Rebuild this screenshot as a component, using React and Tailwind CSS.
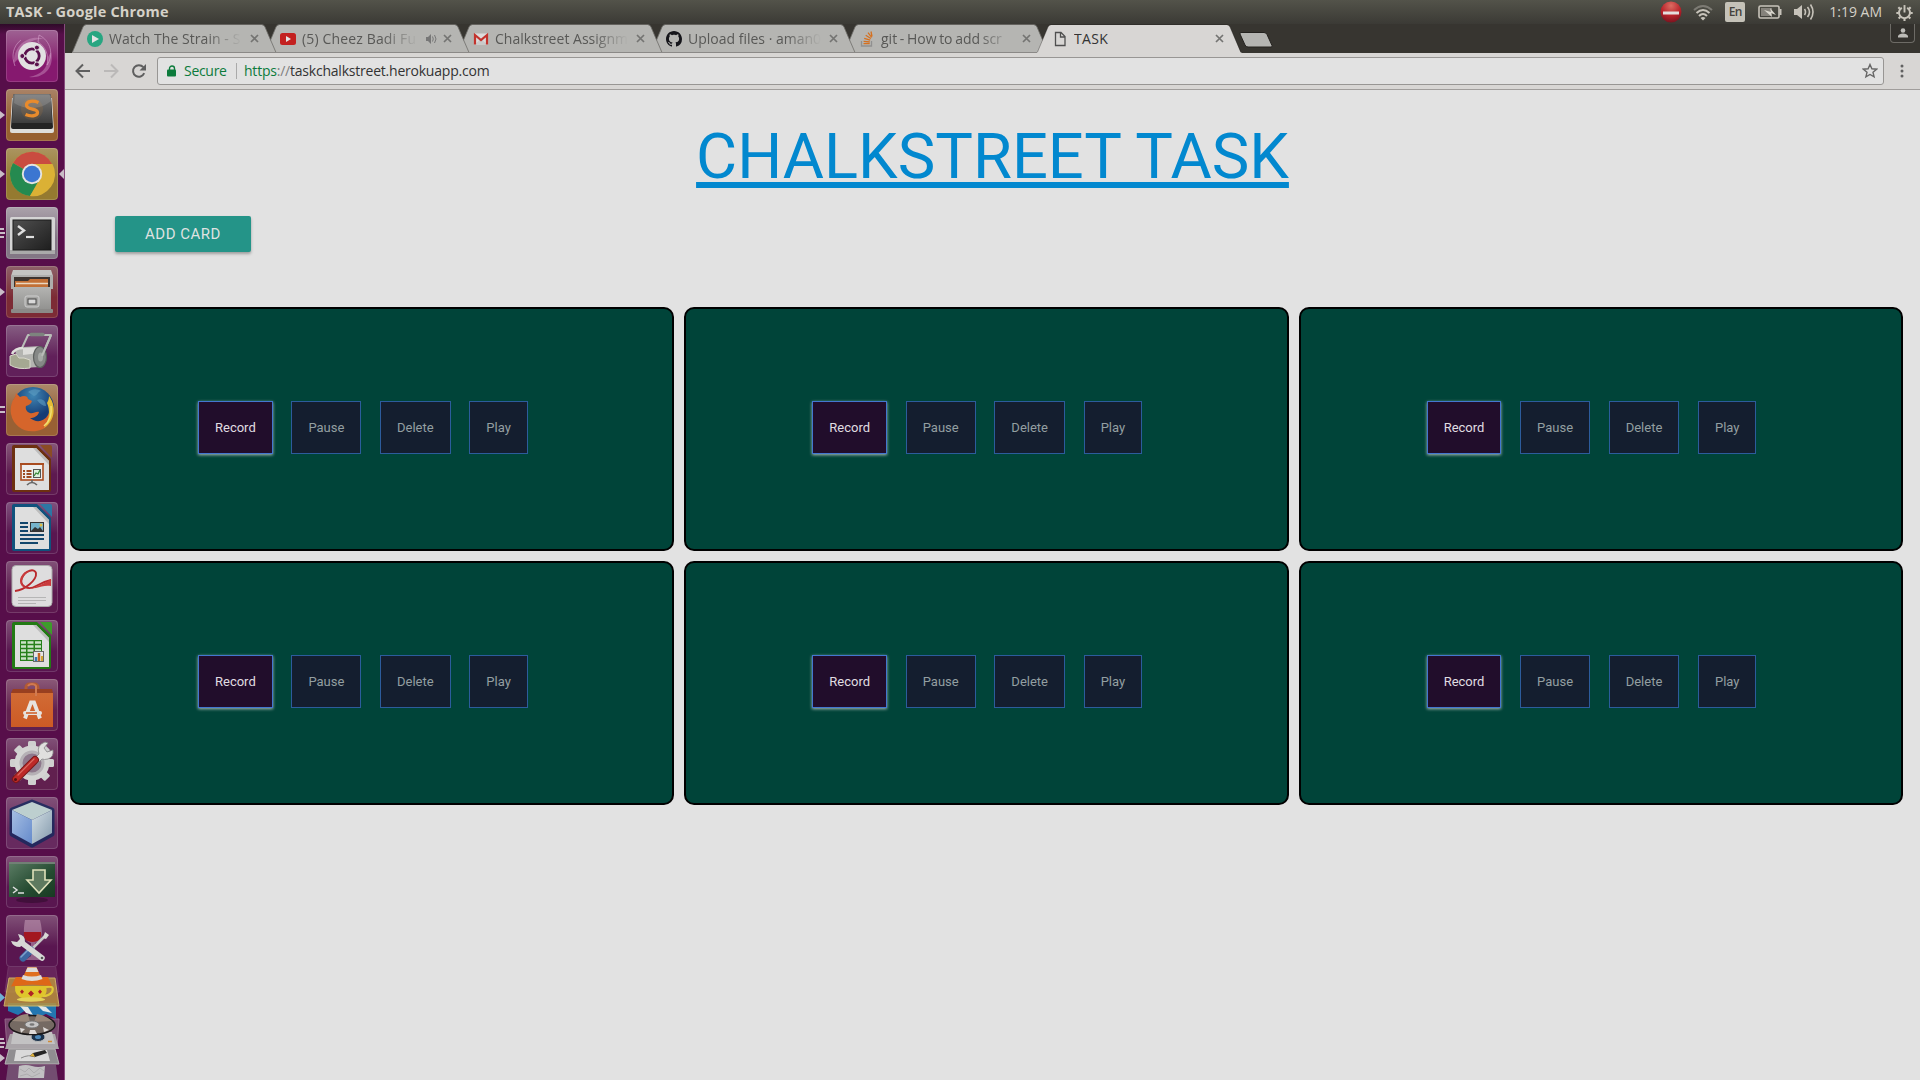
import React from "react";

const shade = "font-['Open_Sans',sans-serif]";

/* ---------- launcher icons, each drawn on a 52 x 52 tile ---------- */

const Ubuntu = () => (
  <g>
    <path d="M8 33C7 16 22 4 38 9c-12-1-22 6-24 18zM45 22c4 16-8 27-22 25 12-2 19-9 19-20z" fill="#d6a5cc" opacity=".4" />
    <path d="M33 5c12 6 15 20 8 30 2-10-1-18-9-23zM15 10C7 16 5 26 9 36" fill="none" stroke="#d9a8d0" strokeWidth="1" opacity=".55" />
    <circle cx="26" cy="26" r="14" fill="#e2e0e2" />
    <circle cx="26" cy="26" r="7.2" fill="none" stroke="#5a104d" strokeWidth="2.8" />
    <path d="M26 26L15 26M26 26l5.500-9.500M26 26l5.500 9.500" stroke="#e2e0e2" strokeWidth="1.4" />
    {[[16.300, 26], [30.900, 17.600], [30.900, 34.400]].map(([x, y]) => (
      <circle key={y} cx={x} cy={y} r="2.500" fill="#5a104d" stroke="#e2e0e2" strokeWidth="1" />
    ))}
  </g>
);

const Sublime = () => (
  <g>
    <path d="M6 9h40l2 33q0 2-2 2H6q-2 0-2-2z" fill="#deddda" />
    <path d="M9 5h34q2 0 2 2l2 31q0 2-2 2H7q-2 0-2-2L7 7q0-2 2-2z" fill="#242424" />
    <path d="M9 5h34q2 0 2 2l1 27H6L7 7q0-2 2-2z" fill="url(#gKey)" />
    <path d="M8 14C20 22 36 20 45 12L44 7q0-1-1-1H9z" fill="#aaa" opacity=".3" />
    <ellipse cx="26" cy="20" rx="11" ry="11" fill="#e98b2c" opacity=".12" />
    <path d="M32.500 13.500c-5-2-12-2-12 2.500 0 5.500 11 3 11 7.500 0 4-7 4-12 2" fill="none" stroke="#e98b2c" strokeWidth="3.300" />
  </g>
);

const ChromeIcon = () => (
  <g>
    <circle cx="26" cy="26" r="22" fill="#d9ae35" />
    <path d="M26 26L7 15A22 22 0 0 1 46 16z" fill="#c94c40" />
    <path d="M26 26L7 15a22 22 0 0 0 17 33l9-16z" fill="#258a50" />
    <path d="M26 16h20.500A22 22 0 0 1 24 48l11-17z" fill="#dbb135" />
    <circle cx="26" cy="26" r="10.200" fill="#e5e4e2" />
    <circle cx="26" cy="26" r="8.300" fill="#3c76d1" />
  </g>
);

const Terminal = () => (
  <g>
    <rect x="4" y="10" width="45" height="37" rx="1.500" fill="#d4d4d4" />
    <rect x="4" y="43" width="45" height="4" fill="#aaa" />
    <rect x="7" y="13" width="38" height="30" fill="url(#gTerm)" stroke="#1b1b1b" />
    <path d="M12 19l6 4.500-6 4.500" fill="none" stroke="#dedede" strokeWidth="2.400" />
    <path d="M20 30h8" stroke="#dedede" strokeWidth="2.200" />
  </g>
);

const Files = () => (
  <g>
    <path d="M7 4h38l2 6H5z" fill="#c4c4c2" />
    <rect x="5" y="9" width="42" height="14" fill="#aeaeac" />
    <rect x="8" y="11" width="36" height="11" fill="#3d342f" />
    <path d="M9 15h13l2-2h18v9H9z" fill="#c27036" />
    <path d="M10 17.500h32" stroke="#ead8c2" strokeWidth="1.500" />
    <rect x="7" y="21" width="38" height="26" rx="1" fill="url(#gMetal)" />
    <rect x="5" y="43" width="42" height="4" rx="1" fill="#8b8a88" />
    <rect x="19" y="30" width="14" height="11" rx="2" fill="#a6a6a4" stroke="#cecece" />
    <rect x="22" y="33" width="8" height="5" fill="#d9d9d9" stroke="#444" />
  </g>
);

const Roller = () => (
  <g>
    <path d="M16 23l6-13h23L36 31" fill="none" stroke="#b9bdb8" strokeWidth="2" strokeLinejoin="round" />
    <path d="M25 9.500h12" stroke="#7d837e" strokeWidth="3.400" strokeLinecap="round" />
    <path d="M9 26q3-4 8-4l17-1v21l-18 1z" fill="#b3b4b0" />
    <path d="M17 23l16-1v6l-16 2z" fill="#dcdcd9" />
    <path d="M4 31l6-2 3 4h5l6 2v8q-12 2-20-3z" fill="#a5a892" stroke="#d8d8cb" strokeWidth="1" />
    <path d="M6 29q3-6 11-6" fill="none" stroke="#e0e0dc" strokeWidth="2.500" />
    <ellipse cx="34" cy="32" rx="6.500" ry="10.500" fill="#858886" stroke="#5c5f5d" strokeWidth="1.200" />
    <ellipse cx="34.500" cy="32" rx="2.500" ry="4.500" fill="#a6a9a6" />
    <path d="M36 31l9-21" stroke="#b9bdb8" strokeWidth="2" />
  </g>
);

const Firefox = () => (
  <g>
    <circle cx="27" cy="24" r="21" fill="url(#gFox)" />
    <path d="M22 8c5-4 10-3 13-1-4 1-3 4-7 5zM31 16c5-2 9 1 9 6-3 0-6-2-9-6z" fill="#5d9dc1" opacity=".6" />
    <path d="M45 16c5 10 3 23-8 29-14 6-29 0-32-15-1-7 1-13 4-17l1-4 4 4c4-2 8-1 8 2l4 2c-1 3-3 4-6 5-1 3 1 6 4 7 3 1 6-2 9-1-1 4-5 6-9 6 6 5 14 4 18-3 3-5 3-10 3-15z" fill="#d6652b" />
    <path d="M43 12c7 9 7 24-5 32 6-8 6-19 3-25 1-2 2-4 2-7z" fill="#e4bc35" />
    <path d="M45 22c1 8-1 15-7 20" fill="none" stroke="#f1df73" strokeWidth="1.500" />
  </g>
);

const OfficeDoc = ({ color, light, children }) => (
  <g>
    <path d="M8 2h23l14 14v31q0 2-2 2H8q-2 0-2-2V4q0-2 2-2z" fill={color} />
    <path d="M34 2h10q2 0 2 2v11z" fill={light} />
    <path d="M9 5h21l13 13v29H9z" fill="#dedede" />
    <path d="M30 5l13 13v4L27 5z" fill="#bcbcbc" />
    {children}
  </g>
);

const Impress = () => (
  <OfficeDoc color="#6d3010" light="#8a4c25">
    <rect x="15" y="21" width="22" height="16" fill="#eee" stroke="#a94c20" strokeWidth="1.600" />
    <path d="M14 21h24" stroke="#a94c20" strokeWidth="2" />
    <path d="M17 28h2m1.500 0h5M17 31h2m1.500 0h5M17 34h2m1.500 0h5" stroke="#9c4b23" strokeWidth="1.800" />
    <rect x="27.500" y="26.500" width="7" height="8" fill="#dcefdc" stroke="#555" />
    <path d="M28 33l2-3 2 1 2-4" stroke="#358437" fill="none" strokeWidth="1.300" />
    <path d="M26 37v3m-5 2q5-5 10 0" stroke="#666" fill="none" strokeWidth="1.600" />
  </OfficeDoc>
);

const Writer = () => (
  <OfficeDoc color="#10527d" light="#2c76a4">
    <path d="M14 21h8M14 25h8M14 29h8M14 33h24M14 37h24M14 41h18" stroke="#12466c" strokeWidth="2" />
    <rect x="24.500" y="20.500" width="13" height="9" fill="#75b3cb" stroke="#333" />
    <path d="M25 29l4-4 3 2 2-2 3 4z" fill="#333" />
    <circle cx="35" cy="23" r="1.500" fill="#e1bd42" />
  </OfficeDoc>
);

const Calc = () => (
  <OfficeDoc color="#227a14" light="#3d9c2b">
    <rect x="14" y="20" width="22" height="21" fill="#27801b" />
    {[21.500, 25.500, 29.500, 33.500, 37.500].map((y) => (
      <path key={y} d={`M15 ${y + 1}h5m1.500 0h6m1.500 0h6`} stroke="#cce2c8" strokeWidth="2.300" />
    ))}
    <rect x="27.500" y="31.500" width="10" height="10" fill="#e6e6e6" stroke="#666" />
    <path d="M30 41v-4" stroke="#3678b1" strokeWidth="2.500" />
    <path d="M33 41v-8" stroke="#c36325" strokeWidth="2.500" />
    <path d="M36 41v-5" stroke="#d2a432" strokeWidth="2" />
  </OfficeDoc>
);

const Evince = () => (
  <g>
    <rect x="6" y="4.500" width="40" height="41" rx="4" fill="#deddde" stroke="#aaa" />
    <path d="M9 30c10-1 22-11 21-18-1-5-11-3-14 5-3 8 6 13 14 8 5-3 10-5 15-6" fill="none" stroke="#b9292d" strokeWidth="1.900" />
    <path d="M14 19c1-6 7-10 12-9-5 1-8 4-10 9-1 4 2 7 6 8-5 0-8-3-8-8z" fill="#c93b3c" />
    <path d="M45 18v7c-6-1-10 1-15 2l-5 .5q12-4 20-9.500z" fill="#c93b3c" />
    <path d="M12 36.500h28M12 39.500h28M12 42.500h18" stroke="#b5b5b5" />
  </g>
);

const Software = () => (
  <g>
    <path d="M20 18V9q0-4 4-4h4q4 0 4 4v9" fill="none" stroke="#b25a34" strokeWidth="3" />
    <path d="M7 10h39l1 4H5z" fill="#993f20" />
    <path d="M5 14h42v34H5z" fill="url(#gBag)" />
    <path d="M22 7q1-2 4-2t4 2v10" fill="none" stroke="#d17a50" strokeWidth="2" />
    <path d="M19 39.500l6-16h3l6 16" fill="none" stroke="#e7e3df" strokeWidth="3.800" />
    <path d="M19 34h15" stroke="#e7e3df" strokeWidth="4" strokeLinecap="round" />
    <path d="M20 34h11" stroke="#cf5b24" strokeWidth="1.500" />
  </g>
);

const Wrench = () => (
  <g>
    <g fill="#cfd0cf">
      {[0, 45, 90, 135].map((a) => (
        <rect key={a} x="22" y="3" width="8" height="44" rx="1.500" transform={`rotate(${a} 26 25)`} />
      ))}
    </g>
    <circle cx="26" cy="25" r="17.500" fill="#d4d4d3" />
    <circle cx="26" cy="25" r="11" fill="#8e788c" stroke="#b5b0b5" strokeWidth="3" />
    <path d="M28 21l5-5q-3-9 6-12l3 1-4 5 3 4 6-2q1 7-5 9-4 1-6 0l-5 5z" fill="#e0e0de" stroke="#888" strokeWidth=".8" />
    <path d="M10 41l19-19" stroke="#79181a" strokeWidth="8" strokeLinecap="round" />
    <path d="M10 41l19-19" stroke="#bd2928" strokeWidth="6" strokeLinecap="round" />
    <path d="M12 37l16-16" stroke="#dc6a60" strokeWidth="1.200" strokeLinecap="round" />
    <circle cx="9.500" cy="41.500" r="1.500" fill="#511" />
  </g>
);

const Cube = () => (
  <g>
    <path d="M26 5l20 8v24L26 48 6 37V13z" fill="#14285d" stroke="#14285d" strokeWidth="5" strokeLinejoin="round" opacity=".8" />
    <path d="M26 5l20 8-20 10L6 13z" fill="#bdcfcf" />
    <path d="M6 13l20 10v24L6 36z" fill="url(#gCubeL)" />
    <path d="M46 13L26 23v24l20-11z" fill="url(#gCubeR)" />
  </g>
);

const Guake = () => (
  <g>
    <ellipse cx="26" cy="44" rx="16" ry="3" fill="#2a0a26" opacity=".5" />
    <path d="M3 6h46v35H3z" fill="url(#gGuake)" />
    <path d="M3 6h46v2H3z" fill="#718075" />
    <path d="M27 14h12v10h6L33 37 21 24h6z" fill="#5e7a5f" stroke="#dfe1ba" strokeWidth="1.600" />
    <path d="M7 31l4 3-4 3M12 37h6" fill="none" stroke="#dedede" strokeWidth="1.500" />
  </g>
);

const WineTools = () => (
  <g>
    <path d="M19 5h15c3 12 3 21-5 23v13l6 4H19l6-4V28c-8-2-8-12-6-23z" fill="#cda8bf" opacity=".5" />
    <path d="M18 17h17c1 6-2 10-8.500 10S17 23 18 17z" fill="#a31820" />
    <path d="M22 38l18-18" stroke="#c7c8c6" strokeWidth="2.500" />
    <path d="M39 17l4 3-3 4-3-1z" fill="#d7d8d5" />
    <path d="M17 43l8-8" stroke="#3c66a1" strokeWidth="7" strokeLinecap="round" />
    <path d="M15 42l8-8" stroke="#7fa0cc" strokeWidth="1.500" strokeLinecap="round" />
    <path d="M16 28l20 15" stroke="#d7d8d5" strokeWidth="5.500" strokeLinecap="round" />
    <path d="M12 19q8 1 7 9l-5 4q-7 0-9-6l6 1 3-3z" fill="#d7d8d5" />
    <circle cx="36" cy="43" r="1.300" fill="#555" />
  </g>
);

const launcher = [
  { Icon: Ubuntu, tile: "from-[#9e6293] to-[#86196f]" },
  { Icon: Sublime, tile: "from-[#a98367] to-[#97602f]", mark: "arrow" },
  { Icon: ChromeIcon, tile: "from-[#ab9560] to-[#957a30]", mark: "arrow", active: true },
  { Icon: Terminal, tile: "from-[#aba2ab] to-[#837785]", mark: "three" },
  { Icon: Files, tile: "from-[#8d6169] to-[#7c2b35]", mark: "arrow" },
  { Icon: Roller, tile: "from-[#865e83] to-[#61205a]" },
  { Icon: Firefox, tile: "from-[#ab886a] to-[#986034]", mark: "two" },
  { Icon: Impress, tile: "from-[#865779] to-[#5d194f]" },
  { Icon: Writer, tile: "from-[#80527e] to-[#591650]" },
  { Icon: Evince, tile: "from-[#815178] to-[#5d194f]" },
  { Icon: Calc, tile: "from-[#815178] to-[#591650]" },
  { Icon: Software, tile: "from-[#8b5978] to-[#61204e]" },
  { Icon: Wrench, tile: "from-[#815178] to-[#61204f]" },
  { Icon: Cube, tile: "from-[#815178] to-[#672a5f]" },
  { Icon: Guake, tile: "from-[#815178] to-[#591650]" },
  { Icon: WineTools, tile: "from-[#815178] to-[#591650]" },
];

const Mark = ({ kind }) => {
  if (!kind) return null;
  return (
    <svg className="absolute -left-1.5 top-5 h-3 w-[6px]" viewBox="0 0 6 12" fill="#c9bdc7">
      {kind === "arrow" && <path d="M0 2l5 4-5 4z" />}
      {kind === "two" && <path d="M0 2h5v2H0zM0 7h5v2H0z" />}
      {kind === "three" && <path d="M0 1h4v2H0zM0 5h5v2H0zM0 9h4v2H0z" />}
    </svg>
  );
};

const Defs = () => (
  <svg className="absolute h-0 w-0">
    <defs>
      <linearGradient id="gKey" x1="0" y1="0" x2="0" y2="1"><stop stopColor="#797979" /><stop offset="1" stopColor="#3d3d3d" /></linearGradient>
      <linearGradient id="gTerm" x1="0" y1="0" x2="1" y2="1"><stop stopColor="#505050" /><stop offset="1" stopColor="#1e1e1e" /></linearGradient>
      <linearGradient id="gMetal" x1="0" y1="0" x2="0" y2="1"><stop stopColor="#b4b4b2" /><stop offset="1" stopColor="#8d8d8b" /></linearGradient>
      <radialGradient id="gFox" cx=".5" cy=".2"><stop stopColor="#3f86b4" /><stop offset="1" stopColor="#153c75" /></radialGradient>
      <linearGradient id="gBag" x1="0" y1="0" x2="0" y2="1"><stop stopColor="#d16b35" /><stop offset="1" stopColor="#cd5a25" /></linearGradient>
      <linearGradient id="gCubeL" x1="0" y1="0" x2="1" y2="1"><stop stopColor="#a6bfe3" /><stop offset="1" stopColor="#658acb" /></linearGradient>
      <linearGradient id="gCubeR" x1="0" y1="0" x2="1" y2="1"><stop stopColor="#d3dfe5" /><stop offset="1" stopColor="#8399ac" /></linearGradient>
      <linearGradient id="gGuake" x1="0" y1="0" x2="1" y2="1"><stop stopColor="#5c7d65" /><stop offset=".6" stopColor="#254b31" /><stop offset="1" stopColor="#183a22" /></linearGradient>
      <radialGradient id="gNo" cx=".5" cy=".2" r=".8"><stop stopColor="#dc6c62" /><stop offset=".6" stopColor="#b7222a" /><stop offset="1" stopColor="#7a1420" /></radialGradient>
    </defs>
  </svg>
);

/* The collapsed pile of icons at the foot of the launcher */
const FoldedStack = () => (
  <svg className="-mt-[13px] h-[119px] w-16 shrink-0" viewBox="0 962 64 119">
    <path d="M9 963h46l4 30H5z" fill="#8c5a83" opacity=".3" stroke="#a987a2" />
    <path d="M5 1020h54l-2 29H7z" fill="#77466e" stroke="#936588" />
    <path d="M8 1004h48v16l-10-5-12 5-8-9-8 5-10-4z" fill="#2376b0" />
    <path d="M20 1007l8 1 5 8-7-2zM37 1006l9 2 6 6-9-2z" fill="#e2e7e9" />
    <path d="M10 1035h45l4 15H5z" fill="#a9a4a8" />
    <path d="M13 1033h39l3 12H11z" fill="#c3c2c3" />
    <ellipse cx="38" cy="1038" rx="7" ry="4.500" fill="#1b324c" stroke="#bbb" />
    <ellipse cx="38" cy="1038" rx="3" ry="2" fill="#4b86b7" />
    <path d="M48 1042.500h4" stroke="#d18b34" strokeWidth="1.500" />
    <ellipse cx="32" cy="1026" rx="23" ry="9.500" fill="#756a63" stroke="#1b1819" strokeWidth="1.500" />
    <path d="M12 1022q7-7 16-7l2 8zM52 1022q-7-6-15-7l-3 8z" fill="#98877a" />
    <path d="M20 1029l5 1-4 4zM43 1028l6 3-5 2zM30 1031h5l2 4h-8z" fill="#dedad8" />
    <ellipse cx="32" cy="1025.500" rx="7" ry="3.500" fill="#c6c5c5" stroke="#777" />
    <ellipse cx="32" cy="1025.500" rx="2.500" ry="1.200" fill="#777" />
    <path d="M9 979h46l4 28H4z" fill="#b9923f" opacity=".85" stroke="#dbc46f" />
    <path d="M15 987h31q3 10-8 13H24q-10-3-9-13z" fill="#dfc62c" />
    <path d="M46 988q9-2 6 5-3 4-9 4" fill="none" stroke="#e0c937" strokeWidth="2.200" />
    <ellipse cx="31" cy="1000.500" rx="14" ry="2.200" fill="#e4d35a" />
    <path d="M22 990.500l2 2.300-2 2.300-2-2.300zM40 990.500l2 2.300-2 2.300-2-2.300zM31 991.500l3 3-3 3-3-3z" fill="#b02224" />
    <path d="M16 978h32l4 9-20-1.500-21 2z" fill="#de6818" />
    <path d="M29.500 964q2.500-1 5 0l6.500 14q-9 4-18 0z" fill="#e06f1e" />
    <path d="M27.500 968.500h9l2 4.500H25.500z" fill="#dddcd8" />
    <path d="M23 976q9 3 18 0l1.500 4q-10.500 4-21 0z" fill="#dddcd8" />
    <path d="M9 1050h46l4 15H5z" fill="#908e91" stroke="#b2b0b2" />
    <path d="M16 1051h31l3 11H14z" fill="#dadada" />
    <path d="M21 1059q8-4 14-1" fill="none" stroke="#888" />
    <path d="M30 1057l3-3 12-3 2 3-12 4z" fill="#252525" />
    <path d="M30 1057l3-3 2 4z" fill="#dfb23a" />
    <path d="M8 1066h48l2 15H6z" fill="#734d71" />
    <path d="M19 1067q7-2 13 0t13 0l-1 12H18z" fill="#c1c0c2" />
    <path d="M20 1070l5 3 4-4 5 5 6-5 4 3M20 1077l7-2 5 3 8-4" fill="none" stroke="#adacae" strokeWidth="1" />
    <path d="M0 994l5 4.500-5 4.500z" fill="#6fb0d6" />
    <path d="M0 1039h4v2H0zM0 1043h5v2H0zM0 1047h4v2H0zM0 1055l5 4-5 4z" fill="#c9bdc7" />
  </svg>
);

const Launcher = () => (
  <aside className="flex w-[65px] shrink-0 flex-col items-start gap-[7px] overflow-hidden border-r border-[#874b7d] bg-[#570e4a] bg-linear-to-b from-[#2f0a29] from-0% to-[#570e4a] to-[1%] pt-1.5">
    {launcher.map(({ Icon, tile, mark, active }, i) => (
      <div key={i} className={`relative ml-1.5 size-[52px] shrink-0 rounded-[4px] bg-linear-to-b to-60% ${tile}`}>
        <div className="absolute inset-0 rounded-[4px] border border-white/15" />
        <svg className="relative block size-[52px]" viewBox="0 0 52 52"><Icon /></svg>
        <Mark kind={mark} />
        {active && (
          <svg className="absolute -right-1.5 top-5 h-3 w-[5px]" viewBox="0 0 5 12"><path d="M5 1L0 6l5 5z" fill="#c9bdc7" /></svg>
        )}
      </div>
    ))}
    <FoldedStack />
  </aside>
);

/* ---------- desktop top bar ---------- */

const TopBar = () => (
  <header className={`flex h-6 shrink-0 items-center bg-linear-to-b from-[#53534a] to-[#3b3a35] pl-1.5 text-[#d5d1c8] ${shade}`}>
    <span className="text-[14.5px] font-bold leading-6 tracking-[0.2px]">TASK - Google Chrome</span>
    <div className="ml-auto flex h-6 items-center">
      <svg className="mr-[11px] size-[22px]" viewBox="0 0 22 22">
        <circle cx="11" cy="11" r="10.500" fill="url(#gNo)" />
        <rect x="3" y="10.500" width="16" height="3" fill="#e3dede" />
      </svg>
      <svg className="mr-3 h-[22px] w-5" viewBox="0 0 20 22" fill="none" strokeWidth="2">
        <path d="M1 9q9-8 18 0" stroke="#7d7b74" />
        <path d="M3.500 12q6.500-6 13 0M6 15q4-4 8 0" stroke="#c7c3ba" />
        <path d="M7.500 17q2.500-2 5 0L10 19.500z" fill="#c7c3ba" />
      </svg>
      <div className="mr-[13px] flex h-5 w-5 items-center justify-center rounded-[2px] bg-[#c5c2b8] text-[12px] font-semibold tracking-tighter text-[#45433d]">En</div>
      <svg className="mr-3 h-[14px] w-6" viewBox="0 0 24 14">
        <rect x="1" y="1" width="20" height="12" rx="1.500" fill="none" stroke="#c7c3ba" strokeWidth="1.600" />
        <rect x="3" y="3" width="11" height="8" fill="#85827b" />
        <path d="M21.500 4h2v6h-2z" fill="#c7c3ba" />
        <path d="M6 5l7 2-1-4 6 7-5-2 1 4z" fill="#d8d5cc" />
      </svg>
      <svg className="mr-[15px] h-[18px] w-5" viewBox="0 0 20 18">
        <path d="M0 6h3l5-4v14l-5-4H0z" fill="#c7c3ba" />
        <path d="M10.500 6q2 3 0 6M13.500 4q4 5 0 10M16.500 1.500q5 7.500 0 15" fill="none" stroke="#c7c3ba" strokeWidth="1.600" />
      </svg>
      <span className="mr-[14px] text-[14px] leading-6">1:19 AM</span>
      <svg className="mr-[7px] h-[17px] w-[17px]" viewBox="0 0 16 16" fill="none" stroke="#c7c3ba">
        <path d="M5.500 3.600a5.200 5.200 0 1 0 5 0" strokeWidth="1.900" />
        <path d="M8 1v7" strokeWidth="1.800" />
        <path d="M2.200 3l1.500 1.500M13.800 3l-1.500 1.500M.3 8.500H2.500M13.500 8.500h2.200M2.500 13.700L4 12.200M13.500 13.700L12 12.200M8 13.800V16" strokeWidth="2" />
      </svg>
    </div>
  </header>
);

/* ---------- browser chrome ---------- */

const Putio = () => (
  <svg className="size-4" viewBox="0 0 16 16"><circle cx="8" cy="8" r="8" fill="#27a681" /><path d="M5 4l7 4-7 4z" fill="#e4e4e4" /></svg>
);
const YouTube = () => (
  <svg className="size-4" viewBox="0 0 16 16"><rect y="2" width="16" height="12" rx="2.500" fill="#c3201f" /><path d="M6 5l5 3-5 3z" fill="#e4e4e4" /></svg>
);
const Gmail = () => (
  <svg className="size-4" viewBox="0 0 16 16">
    <path d="M1 2.500h14v11H1z" fill="#dcdcdc" />
    <path d="M2 13.500l6-6 6 6z" fill="#c9c9c9" />
    <path d="M2 13.500v-9.500l6 5 6-5v9.500" fill="none" stroke="#c3332d" strokeWidth="2.200" />
  </svg>
);
const GitHub = () => (
  <svg className="size-4" viewBox="0 0 16 16">
    <path fill="#15151a" d="M8 0C3.580 0 0 3.580 0 8c0 3.540 2.290 6.530 5.470 7.590.4.070.55-.17.55-.38 0-.19-.01-.82-.01-1.490-2.010.37-2.530-.49-2.690-.94-.09-.23-.48-.94-.82-1.130-.28-.15-.68-.52-.01-.53.63-.01 1.080.58 1.230.82.72 1.210 1.870.87 2.330.66.07-.52.28-.87.51-1.070-1.780-.2-3.640-.89-3.640-3.950 0-.87.31-1.590.82-2.150-.08-.2-.36-1.020.08-2.120 0 0 .67-.21 2.200.82.64-.18 1.320-.27 2-.27s1.360.09 2 .27c1.530-1.040 2.200-.82 2.200-.82.44 1.100.16 1.920.08 2.120.51.56.82 1.270.82 2.150 0 3.070-1.870 3.750-3.650 3.950.29.25.54.73.54 1.480 0 1.070-.01 1.930-.01 2.200 0 .21.15.46.55.38A8.010 8.010 0 0 0 16 8c0-4.420-3.580-8-8-8z" />
  </svg>
);
const StackOverflow = () => (
  <svg className="size-4" viewBox="0 0 16 16" fill="none">
    <path d="M2.500 10v5h10v-5" stroke="#909090" strokeWidth="1.300" />
    <path d="M4.500 12.700h6.200M4.600 10.300l6.200.7M5.200 7.400l6 1.800M6.700 4.300l5.200 3.200M9 1.700l3.700 4.600M12 .5l1 5" stroke="#d5701f" strokeWidth="1.300" />
  </svg>
);
const Page = () => (
  <svg className="size-4" viewBox="0 0 16 16" fill="none" stroke="#4f4f4f" strokeWidth="1.300">
    <path d="M3.500 1.500h5.500l4 4v9h-9.500zM8.500 1.500v4.500H13" />
  </svg>
);

const tabs = [
  { Fav: Putio, text: "Watch The Strain - S", z: "z-[5]", fit: "tracking-[0.06px]" },
  { Fav: YouTube, text: "(5) Cheez Badi Fu", z: "z-[4]", audio: true, fit: "tracking-[0.15px]" },
  { Fav: Gmail, text: "Chalkstreet Assignm", z: "z-[3]", fit: "tracking-[0.02px]" },
  { Fav: GitHub, text: "Upload files · aman0", z: "z-[2]", fit: "tracking-normal" },
  { Fav: StackOverflow, text: "git - How to add scr", z: "z-[1]", fit: "[word-spacing:-1px]" },
  { Fav: Page, text: "TASK", z: "z-[6]", active: true, fit: "tracking-[0.3px]" },
];

const Tab = ({ Fav, text, z, audio, active, fit }) => (
  <div className={`relative -mr-3 flex h-[29px] w-[205px] shrink-0 items-center pl-[15px] ${z}`}>
    <svg className="absolute inset-0 h-[29px] w-[205px]" viewBox="0 0 205 29">
      <path d="M0 29L.5 28L11 3Q12 1 14 1H190Q192 1 193 3L203.500 28L205 29z" fill={active ? "#d8d6d4" : "#b5b5b2"} />
      <path d="M.5 28L11 3Q12 .5 14 .5H190Q192 .5 193 3L204 28.500" fill="none" stroke={active ? "#24221f" : "#6f6e6a"} strokeWidth="1" opacity={active ? 0.35 : 0.8} />
      {!active && <path d="M0 28.500H205" stroke="#8b8987" />}
    </svg>
    <div className="relative"><Fav /></div>
    <div className={`relative ml-1.5 flex-1 overflow-hidden whitespace-nowrap text-[14px] leading-[28px] ${fit} ${active ? "text-[#333]" : "text-[#585856] [mask-image:linear-gradient(to_right,#000_calc(100%-36px),transparent)]"}`}>
      {text}
    </div>
    {audio && (
      <svg className="relative ml-2 h-3 w-[11px]" viewBox="0 0 11 12"><path d="M0 4h2l3-3v10L2 8H0z" fill="#777" /><path d="M6.500 3.500q1.500 2.500 0 5M8.500 2q3 4 0 8" fill="none" stroke="#777" /></svg>
    )}
    <svg className={`relative mr-[18.5px] size-[9px] ${audio ? "ml-1.5" : "ml-2"}`} viewBox="0 0 9 9"><path d="M1 1l7 7M8 1L1 8" stroke="#747472" strokeWidth="1.700" /></svg>
  </div>
);

const TabStrip = () => (
  <div className="flex h-[29px] items-start bg-[#373530] pl-[7px]">
    {tabs.map((t) => <Tab key={t.text} {...t} />)}
    <svg className="ml-[9px] mt-[7.500px] h-4 w-[34px]" viewBox="0 0 34 16">
      <path d="M2 .5h23q2 0 3 2l5 11q.5 1.500-1 1.500H9q-2 0-3-2L1 2Q.5.500 2 .500z" fill="#b5b5b2" stroke="#24221f" />
    </svg>
    <div className="ml-auto mr-[5px] flex h-[19px] w-[25px] items-center justify-center rounded-b-[4px] border border-t-0 border-[#6d6b66] bg-[#33312d]">
      <svg className="h-2.5 w-2.5" viewBox="0 0 10 10" fill="#bdbcb8"><circle cx="5" cy="2.500" r="2.300" /><path d="M0 9.500V8q1-2.500 5-2.500T10 8v1.500z" /></svg>
    </div>
  </div>
);

const Toolbar = () => (
  <div className="flex h-[37px] items-center border-b border-[#a09d9b] bg-[#d8d6d4] pl-2.5">
    <svg className="h-4 w-4" viewBox="0 0 16 16" fill="none" stroke="#5f5f5f" strokeWidth="2"><path d="M15 8H2M8 1.500L1.500 8 8 14.500" /></svg>
    <svg className="ml-3 h-4 w-4" viewBox="0 0 16 16" fill="none" stroke="#bbb9b8" strokeWidth="2"><path d="M1 8h13M8 1.500L14.500 8 8 14.500" /></svg>
    <svg className="ml-3 h-4 w-4" viewBox="0 0 16 16"><path d="M13.200 10.200A5.800 5.800 0 1 1 12.300 4.200" fill="none" stroke="#5f5f5f" strokeWidth="2" /><path d="M15 1v6.500H8.500z" fill="#5f5f5f" /></svg>
    <div className="ml-2.5 flex h-7 w-[1727px] items-center rounded-[3px] border border-[#989694] bg-[#e2e2e2] pb-px pl-[9px] pr-[5px] text-[14px]">
      <svg className="h-3 w-2.5" viewBox="0 0 10 12"><path d="M2.500 5V3.500a2.500 2.500 0 0 1 5 0V5" fill="none" stroke="#0c7b3c" strokeWidth="1.400" /><rect x="0" y="4.500" width="9" height="7" rx="1" fill="#0c7b3c" /></svg>
      <span className="ml-[7px] w-[43px] tracking-[-0.3px] text-[#0c7b3c]">Secure</span>
      <span className="ml-[9px] h-4 w-px bg-[#aaa]" />
      <span className="ml-[7px] tracking-[-0.22px] text-[#333]"><span className="text-[#0c7b3c]">https</span><span className="text-[#808080]">://</span>taskchalkstreet.herokuapp.com</span>
      <svg className="ml-auto size-4" viewBox="0 0 16 16" fill="none" stroke="#666" strokeWidth="1.400"><path d="M8 1.500l1.900 4.300 4.700.4-3.600 3.100 1.100 4.600L8 11.500l-4.100 2.400L5 9.300 1.400 6.200l4.700-.4z" /></svg>
    </div>
    <svg className="ml-4 h-[14px] w-1" viewBox="0 0 4 14" fill="#616161"><circle cx="2" cy="2" r="1.500" /><circle cx="2" cy="7" r="1.500" /><circle cx="2" cy="12" r="1.500" /></svg>
  </div>
);

/* ---------- page ---------- */

const controls = ["Pause", "Delete", "Play"];

const Card = () => (
  <div className="h-[244px] rounded-[10px] border-2 border-black bg-[#004439] pl-[126px] pt-[92px]">
    <div className="flex h-[53px] gap-[18.65px] text-[13px]">
      <button className="border border-[#4377d0] bg-[#210d2b] px-4 text-[#e0dde2] shadow-[0_1px_3px_rgba(226,226,226,0.75)]">Record</button>
      {controls.map((label) => (
        <button key={label} className="border border-[#2c5c9c] bg-[#141e2f] px-4 text-[#939fa1]">{label}</button>
      ))}
    </div>
  </div>
);

const Content = () => (
  <main className="flex-1 bg-[#e2e2e2] font-['Roboto',sans-serif]">
    <h1 className="pt-8 text-center text-[63.2px] font-normal leading-[69px] text-[#0288cf] underline">CHALKSTREET TASK</h1>
    <button className="ml-[50px] mt-[25px] block h-9 w-[136px] rounded-[2px] bg-[#249488] text-[15px] tracking-[0.5px] text-[#dfe2e1] shadow-[0_2px_3px_rgba(0,0,0,0.3)]">ADD CARD</button>
    <section className="ml-[5px] mr-[17px] mt-[55px] grid grid-cols-3 gap-2.5">
      {Array.from({ length: 6 }, (_, i) => <Card key={i} />)}
    </section>
  </main>
);

export default function App() {
  return (
    <div className="flex h-[1080px] w-[1920px] flex-col overflow-hidden bg-[#373530]">
      <Defs />
      <TopBar />
      <div className="flex min-h-0 flex-1">
        <Launcher />
        <div className={`flex min-w-0 flex-1 flex-col ${shade}`}>
          <TabStrip />
          <Toolbar />
          <Content />
        </div>
      </div>
    </div>
  );
}
